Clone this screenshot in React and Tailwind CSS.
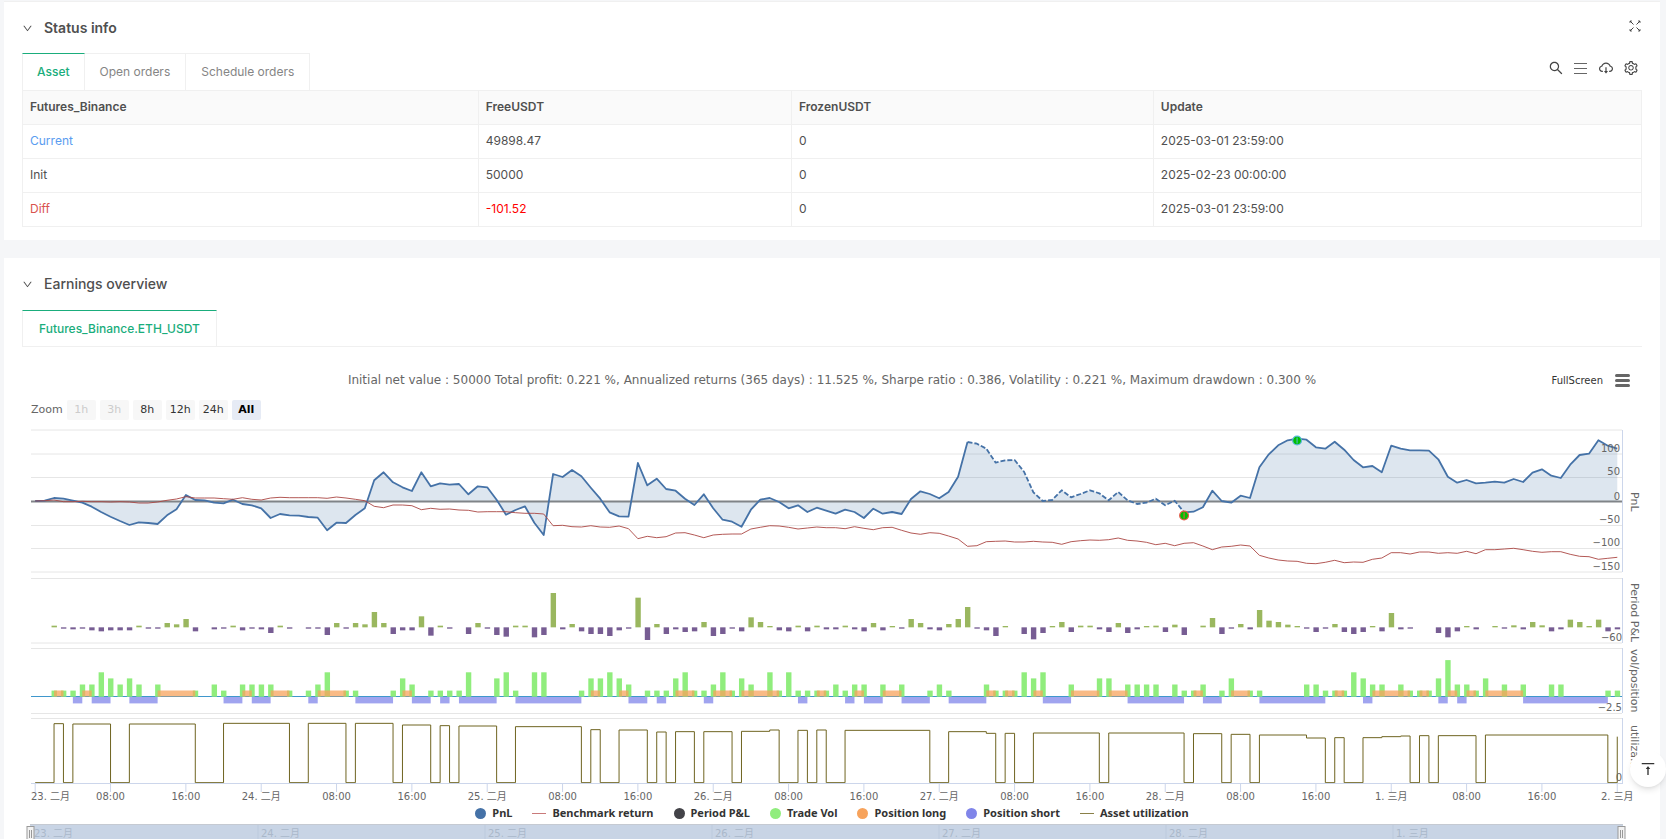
import {
  AiOutlineCloudDownload,
  AiOutlineDown,
  AiOutlineSearch,
  AiOutlineSetting,
  AiOutlineVerticalAlignTop,
} from "react-icons/ai";

const assetRows = [
  { name: "Current", free: "49898.47", frozen: "0", update: "2025-03-01 23:59:00", nameClass: "text-[#5a9cf0]", freeClass: "" },
  { name: "Init", free: "50000", frozen: "0", update: "2025-02-23 00:00:00", nameClass: "", freeClass: "" },
  { name: "Diff", free: "-101.52", frozen: "0", update: "2025-03-01 23:59:00", nameClass: "text-[#d9534f]", freeClass: "text-[#ff0000]" },
];

const zoomRanges = [
  { label: "1h", className: "bg-[#f7f7f7] text-[#cccccc]", disabled: true },
  { label: "3h", className: "bg-[#f7f7f7] text-[#cccccc]", disabled: true },
  { label: "8h", className: "bg-[#f7f7f7] text-[#333333]" },
  { label: "12h", className: "bg-[#f7f7f7] text-[#333333]" },
  { label: "24h", className: "bg-[#f7f7f7] text-[#333333]" },
  { label: "All", className: "bg-[#e6ebf5] font-bold text-black" },
];

const legend = [
  { label: "PnL", color: "#4572a7", dot: true },
  { label: "Benchmark return", color: "#c97a7a" },
  { label: "Period P&L", color: "#434348", dot: true },
  { label: "Trade Vol", color: "#90ed7d", dot: true },
  { label: "Position long", color: "#f7a35c", dot: true },
  { label: "Position short", color: "#8085e9", dot: true },
  { label: "Asset utilization", color: "#8a8048" },
];

// Hourly series. Vertical values are in ticks, three ticks to a pixel.
const TICK = 3;
const STEP = 9.417;
const LEFT = 9;
const RIGHT = 1600;

const pnl = [
  243, 242, 234, 236, 242, 248, 260, 276, 290, 303, 315, 307, 309, 312, 286, 268, 225, 240, 241, 248, 250, 239, 252, 256,
  265, 294, 282, 286, 287, 291, 293, 331, 308, 309, 285, 265, 181, 157, 187, 202, 213, 157, 199, 190, 194, 192, 223, 199,
  202, 239, 284, 270, 259, 308, 345, 162, 171, 150, 169, 203, 236, 277, 289, 290, 129, 196, 176, 207, 212, 236, 255, 223,
  265, 299, 305, 320, 269, 239, 234, 246, 265, 256, 276, 263, 272, 281, 269, 276, 294, 266, 281, 276, 282, 237, 214, 222,
  235, 216, 170, 66, 71, 86, 128, 121, 120, 155, 217, 243, 240, 211, 232, 222, 211, 220, 241, 216, 241, 252, 248, 236,
  256, 242, 277, 275, 262, 212, 243, 248, 227, 234, 142, 103, 76, 61, 56, 59, 82, 86, 65, 89, 120, 142, 138, 157,
  77, 86, 91, 91, 92, 118, 170, 188, 180, 190, 188, 185, 188, 177, 186, 158, 148, 167, 174, 134, 105, 101, 61, 77, 86,
];

const benchmark = [
  243, 242, 240, 245, 245, 244, 245, 245, 246, 245, 246, 249, 249, 246, 241, 237, 230, 234, 234, 234, 236, 238, 233, 238,
  240, 234, 232, 233, 233, 233, 233, 235, 231, 234, 238, 242, 259, 263, 255, 255, 257, 269, 265, 268, 267, 270, 271, 276,
  275, 275, 275, 278, 280, 280, 282, 317, 316, 320, 321, 317, 321, 322, 318, 326, 356, 349, 353, 350, 339, 338, 345, 353,
  345, 343, 342, 342, 327, 322, 317, 318, 322, 327, 324, 321, 323, 323, 326, 320, 325, 329, 323, 322, 331, 339, 343, 338,
  340, 348, 357, 379, 377, 365, 364, 363, 366, 366, 364, 366, 367, 373, 365, 362, 360, 361, 359, 354, 361, 363, 367, 374,
  370, 377, 370, 368, 378, 389, 381, 379, 375, 378, 406, 414, 420, 423, 424, 430, 431, 427, 421, 428, 426, 427, 418, 414,
  398, 398, 402, 396, 396, 400, 398, 400, 394, 401, 389, 389, 387, 385, 389, 394, 397, 395, 395, 403, 409, 410, 418, 415, 412,
];

const periodPnl = [
  0, 0, 5, -4, -6, -4, -9, -12, -9, -9, -9, 5, -4, -4, 13, 9, 25, -12, 0, -6, -4, 5, -9, -4,
  -6, -17, 5, -4, 0, -4, -4, -23, 13, -4, 13, 9, 46, 13, -20, -9, -9, 33, -25, 5, -4, 0, -20, 13,
  -4, -23, -28, 5, 5, -30, -23, 103, -6, 10, -12, -20, -20, -26, -9, -4, 89, -38, 10, -20, -6, -14, -12, 16,
  -26, -20, -4, -12, 30, 16, 4, -9, -12, 5, -12, 5, -6, -6, 5, -6, -12, 13, -9, 4, -4, 25, 13, -6,
  -9, 10, 25, 61, -4, -9, -26, 4, 0, -20, -36, -17, 4, 16, -14, 5, 5, -6, -14, 13, -17, -6, 4, 5,
  -14, 8, -23, 0, 5, 28, -20, -4, 10, -6, 52, 20, 16, 8, 4, -4, -14, -4, 10, -14, -20, -14, 4, -12,
  43, -6, -4, 0, 0, -17, -30, -12, 4, -6, 0, 4, -4, 6, -6, 16, 6, -12, -6, 23, 16, 4, 23, -12, -6,
];

const tradeVol = [
  0, 0, 1, 1, 1, 2, 2, 4, 3, 2, 3, 2, 0, 2, 0, 0, 0, 1, 0, 2, 1, 0, 2, 2,
  2, 2, 0, 1, 0, 1, 2, 4, 0, 1, 1, 0, 0, 0, 1, 3, 2, 0, 1, 1, 1, 1, 4, 0,
  0, 3, 4, 1, 0, 4, 4, 0, 0, 0, 1, 3, 3, 4, 3, 2, 0, 1, 1, 1, 3, 4, 1, 1,
  2, 4, 1, 3, 2, 0, 4, 1, 4, 1, 1, 1, 1, 2, 1, 2, 2, 0, 2, 0, 2, 0, 0, 1,
  2, 1, 0, 0, 0, 2, 1, 1, 1, 4, 3, 4, 0, 0, 2, 0, 0, 3, 3, 0, 2, 2, 2, 2,
  0, 2, 1, 1, 2, 0, 1, 3, 0, 1, 1, 0, 0, 0, 0, 2, 2, 1, 1, 1, 4, 3, 2, 2,
  0, 2, 1, 1, 1, 3, 6, 2, 2, 1, 3, 0, 2, 0, 2, 0, 0, 2, 2, 0, 0, 0, 0, 1, 1,
];

const longs = [
  [2, 3], [5, 6], [13, 17], [22, 23], [25, 27], [30, 33], [39, 40], [59, 60], [62, 63], [68, 70], [72, 74], [75, 79],
  [83, 84], [87, 88], [90, 92], [101, 102], [103, 104], [106, 107], [110, 113], [114, 116], [123, 124], [127, 129],
  [138, 139], [142, 146], [147, 148], [150, 151], [152, 153], [154, 158],
];

const shorts = [
  [4, 5], [6, 8], [10, 13], [20, 22], [23, 25], [29, 30], [34, 38], [40, 42], [43, 44], [45, 49], [51, 58], [63, 65],
  [66, 67], [71, 72], [81, 82], [86, 87], [88, 90], [92, 95], [97, 101], [107, 110], [116, 122], [124, 126], [130, 137],
  [141, 142], [149, 150], [151, 152], [158, 167],
];

// [from hour, to hour, level]
const utilization = [
  [2, 3, 911], [4, 8, 912], [10, 17, 912], [20, 27, 910], [29, 33, 910], [34, 38, 910], [39, 42, 915], [43, 44, 917],
  [45, 49, 918], [51, 58, 920], [59, 60, 929], [62, 65, 930], [66, 67, 936], [68, 70, 935], [71, 74, 935], [75, 78, 934],
  [78, 79, 930], [81, 82, 931], [83, 84, 930], [86, 95, 931], [97, 101, 935], [101, 102, 940], [103, 104, 940],
  [106, 113, 939], [114, 122, 939], [123, 126, 941], [127, 129, 943], [130, 135, 945], [135, 137, 954], [138, 139, 953],
  [141, 143, 953], [143, 145, 950], [145, 146, 948], [147, 148, 947], [149, 153, 947], [154, 167, 945], [168, 168, 950],
];

const days = ["23. 二月", "24. 二月", "25. 二月", "26. 二月", "27. 二月", "28. 二月", "1. 三月", "2. 三月"];

const yLabels = [
  { text: "100", y: 32 },
  { text: "50", y: 55 },
  { text: "0", y: 80 },
  { text: "−50", y: 103 },
  { text: "−100", y: 126 },
  { text: "−150", y: 150 },
];

const axisTitles = [
  { text: "PnL", y: 72 },
  { text: "Period P&L", y: 163 },
  { text: "vol/position", y: 229 },
  { text: "utiliza...", y: 305 },
];

const hourX = (hour) => 13.2 + hour * STEP;

const points = (series, from = 0, to = series.length - 1) =>
  series
    .slice(from, to + 1)
    .map((value, index) => `${hourX(from + index).toFixed(1)},${(value / TICK).toFixed(1)}`)
    .join(" ");

function utilizationPath() {
  const base = 1088 / TICK;
  let path = `M${hourX(0)} ${base}`;
  let last = 0;
  utilization.forEach(([from, to, level]) => {
    if (from !== last) path += `V${base}H${hourX(from)}`;
    path += `V${level / TICK}H${hourX(to)}`;
    last = to;
  });
  return path;
}

function GridLine({ y, className = "stroke-[#e6e6e6]" }) {
  return <line x1={LEFT} x2={RIGHT} y1={y} y2={y} className={className} />;
}

function PnlPane() {
  const zero = 81;
  return (
    <g>
      {[10, 34, 57.5, 105.5, 128.5, 152].map((y) => (
        <GridLine key={y} y={y} />
      ))}
      <polygon points={`${hourX(0)},${zero} ${points(pnl)} ${hourX(168)},${zero}`} className="fill-[#4572a7]/18" />
      <line x1={LEFT} x2={RIGHT} y1={81.5} y2={81.5} strokeWidth="2.2" className="stroke-[#808488]" />
      <g fill="none" strokeLinejoin="round" strokeWidth="1.8" className="stroke-[#4572a7]">
        <polyline points={points(pnl, 0, 99)} />
        <polyline points={points(pnl, 99, 122)} strokeDasharray="5 2" />
        <polyline points={points(pnl, 122)} />
      </g>
      <polyline points={points(benchmark)} fill="none" className="stroke-[#aa4643]" strokeWidth="0.9" />
      <circle cx={hourX(122)} cy="95.5" r="4.4" strokeWidth="1.2" className="fill-[#00c000] stroke-[#e8594a]" />
      <line x1={hourX(122)} x2={hourX(122)} y1="92.5" y2="98.5" className="stroke-[#e8594a]" />
      <circle cx={hourX(134)} cy="20.5" r="4.4" strokeWidth="1.2" className="fill-[#00c000] stroke-[#5ab8d8]" />
      <line x1={hourX(134)} x2={hourX(134)} y1="17.5" y2="23.5" className="stroke-[#5ab8d8]" />
      {yLabels.map((label) => (
        <text key={label.text} x="1598" y={label.y} textAnchor="end">
          {label.text}
        </text>
      ))}
    </g>
  );
}

function PeriodPane() {
  return (
    <g>
      <GridLine y={158.5} />
      <GridLine y={223} />
      {periodPnl.map((value, index) =>
        value === 0 ? null : (
          <rect
            key={index}
            x={hourX(index) - 2.5}
            y={value > 0 ? (622 - value) / TICK : 622 / TICK}
            width="5.4"
            height={Math.abs(value) / TICK}
            className={value > 0 ? "fill-[#9ab75f]" : "fill-[#775d93]"}
          />
        )
      )}
      <text x="1600" y="221" textAnchor="end">
        −60
      </text>
    </g>
  );
}

function PositionPane() {
  return (
    <g>
      <GridLine y={228.5} />
      <GridLine y={293.5} />
      <GridLine y={276.5} className="stroke-[#3f97cc]" />
      {tradeVol.map((value, index) => (
        <rect
          key={index}
          x={hourX(index) - 2.5}
          y={276.7 - value * 6.1}
          width="5.4"
          height={value * 6.1}
          className="fill-[#90ed7d]"
        />
      ))}
      {longs.map(([from, to]) => (
        <rect key={from} x={hourX(from)} y="270.5" width={(to - from) * STEP} height="6" className="fill-[#f7a35c]/75" />
      ))}
      {shorts.map(([from, to]) => (
        <rect key={from} x={hourX(from)} y="277" width={(to - from) * STEP} height="6.4" className="fill-[#8085e9]/75" />
      ))}
      <text x="1600" y="291" textAnchor="end">
        −2.5
      </text>
    </g>
  );
}

function UtilizationPane() {
  return (
    <g>
      <GridLine y={298.5} />
      <path d={utilizationPath()} fill="none" className="stroke-[#6f6420]" />
      <text x="1600" y="361" textAnchor="end">
        0
      </text>
      <GridLine y={363.5} className="stroke-[#ccd6eb]" />
    </g>
  );
}

function TimeAxis() {
  const ticks = Array.from({ length: 22 }, (_, index) => index * 8);
  const label = (hour) => (hour % 24 === 0 ? days[hour / 24] : hour % 24 === 8 ? "08:00" : "16:00");
  return (
    <g>
      {ticks.map((hour) => (
        <g key={hour}>
          <line x1={hourX(hour)} x2={hourX(hour)} y1="364" y2="372" className="stroke-[#ccd6eb]" />
          <text x={hour === 0 ? LEFT : hourX(hour)} y="380" textAnchor={hour === 0 ? "start" : "middle"}>
            {label(hour)}
          </text>
        </g>
      ))}
    </g>
  );
}

function EarningsChart() {
  return (
    <svg viewBox="0 0 1620 384" className="block w-full fill-[#666666] text-[10px]" role="img" aria-label="Earnings chart">
      <PnlPane />
      <PeriodPane />
      <PositionPane />
      <UtilizationPane />
      <TimeAxis />
      <path d="M1600.5 10V152M1600.5 158V223M1600.5 228V293M1600.5 298V364" className="stroke-[#ccd6eb]" />
      {axisTitles.map((title) => (
        <text key={title.text} transform={`translate(1609 ${title.y}) rotate(90)`} className="text-[11px]">
          {title.text}
        </text>
      ))}
    </svg>
  );
}

function Navigator() {
  return (
    <svg viewBox="0 0 1620 40" className="block w-full text-[10px]" role="img" aria-label="Time range">
      <rect x="8" y="0" width="1593" height="40" className="fill-[#c8d4e5]" />
      <line x1="8" x2="1601" y1="0.5" y2="0.5" className="stroke-[#c5cad2]" />
      {days.slice(0, 7).map((day, index) => (
        <g key={day}>
          {index > 0 && <line x1={9 + index * 227} x2={9 + index * 227} y1="1" y2="40" className="stroke-[#bccadd]" />}
          <text x={12 + index * 227} y="13" className="fill-[#aab8ca]">
            {day}
          </text>
        </g>
      ))}
      {[8.5, 1599.5].map((x) => (
        <g key={x} className="fill-[#f2f2f2] stroke-[#999999]">
          <rect x={x - 3.5} y="2.5" width="7" height="15" />
          <path d={`M${x - 1} 6V14M${x + 1} 6V14`} />
        </g>
      ))}
    </svg>
  );
}

function SectionTitle({ children, className }) {
  return (
    <button type="button" className={`flex items-center gap-[11px] text-sm text-[#4f4f4f] ${className}`}>
      <AiOutlineDown className="size-[11px]" />
      {children}
    </button>
  );
}

export default function App() {
  return (
    <div className="h-screen overflow-hidden bg-[#f5f6f8] pt-px pr-1.5 pl-1 font-['Inter','Noto_Sans_CJK_SC',sans-serif] text-[#505050]">
      <section className="h-[239px] border-t border-[#f0f0f0] bg-white px-[18px] pt-4">
        <div className="flex h-5 items-center justify-between pr-px">
          <SectionTitle className="font-semibold">Status info</SectionTitle>
          <button type="button" aria-label="Expand" className="pb-1">
            <svg viewBox="0 0 12 12" className="size-3 fill-none stroke-[#444444]">
              <path d="M1 1L4.5 4.5M11 1L7.5 4.5M1 11L4.5 7.5M11 11L7.5 7.5" />
              <path d="M1 3V1H3M9 1H11V3M1 9V11H3M9 11H11V9" strokeWidth="0.8" />
            </svg>
          </button>
        </div>
        <div className="mt-[15px] flex h-[37px] justify-between">
          <div role="tablist" className="flex text-xs text-[#858585]">
            <button type="button" role="tab" aria-selected="true" className="border-x border-t border-x-[#f0f0f0] border-t-[#1aad7c] px-3.5 font-medium text-[#1aad7c]">
              Asset
            </button>
            <button type="button" role="tab" className="border-t border-r border-[#f0f0f0] px-[15px]">
              Open orders
            </button>
            <button type="button" role="tab" className="border-t border-r border-[#f0f0f0] px-[15px]">
              Schedule orders
            </button>
          </div>
          <div className="flex h-[30px] items-center gap-[9px] pr-[3px] text-[#444444]">
            <button type="button" aria-label="Search"><AiOutlineSearch className="size-4" /></button>
            <button type="button" aria-label="List">
              <svg viewBox="0 0 16 16" className="size-4 stroke-[#666666]">
                <path d="M1 3.5H14M1 8.5H14M1 13.5H14" />
              </svg>
            </button>
            <button type="button" aria-label="Download"><AiOutlineCloudDownload className="size-4" /></button>
            <button type="button" aria-label="Settings"><AiOutlineSetting className="size-4" /></button>
          </div>
        </div>
        <table className="w-full table-fixed border-collapse text-left text-xs">
          <colgroup>
            <col className="w-[28.15%]" />
            <col className="w-[19.35%]" />
            <col className="w-[22.35%]" />
            <col />
          </colgroup>
          <thead>
            <tr className="h-[34px] bg-[#fafafa]">
              {["Futures_Binance", "FreeUSDT", "FrozenUSDT", "Update"].map((head) => (
                <th key={head} className="border border-[#f0f0f0] px-[7px] pb-0.5 font-semibold">
                  {head}
                </th>
              ))}
            </tr>
          </thead>
          <tbody>
            {assetRows.map((row) => (
              <tr key={row.name} className="h-[34px]">
                <td className={`border border-[#f0f0f0] px-[7px] pb-0.5 ${row.nameClass}`}>{row.name}</td>
                <td className={`border border-[#f0f0f0] px-[7px] pb-0.5 ${row.freeClass}`}>{row.free}</td>
                <td className="border border-[#f0f0f0] px-[7px] pb-0.5">{row.frozen}</td>
                <td className="border border-[#f0f0f0] px-[7px] pb-0.5">{row.update}</td>
              </tr>
            ))}
          </tbody>
        </table>
      </section>

      <section className="mt-[18px] bg-white px-[18px] pt-4">
        <SectionTitle className="font-medium">Earnings overview</SectionTitle>
        <div role="tablist" className="mt-4 flex h-[37px] border-b border-[#f0f0f0]">
          <button type="button" role="tab" aria-selected="true" className="border-x border-t border-x-[#f0f0f0] border-t-[#1aad7c] px-4 text-xs font-medium text-[#1aad7c]">
            Futures_Binance.ETH_USDT
          </button>
        </div>
        <div className="font-['DejaVu_Sans','Noto_Sans_CJK_SC',sans-serif]">
          <div className="mt-[25px] grid grid-cols-[1fr_auto_1fr] items-center">
            <h2 className="col-start-2 text-xs text-[#666666]">
              Initial net value : 50000 Total profit: 0.221 %, Annualized returns (365 days) : 11.525 %, Sharpe ratio : 0.386, Volatility : 0.221 %, Maximum drawdown : 0.300 %
            </h2>
            <div className="flex items-center gap-3 justify-self-end pr-3">
              <button type="button" className="text-[10px] text-[#333333]">FullScreen</button>
              <button type="button" aria-label="Chart menu" className="flex w-[15px] flex-col gap-[2px]">
                <span className="h-[3px] rounded-full bg-[#666666]" />
                <span className="h-[3px] rounded-full bg-[#666666]" />
                <span className="h-[3px] rounded-full bg-[#666666]" />
              </button>
            </div>
          </div>
          <div className="mt-3 flex h-5 items-center gap-1 pl-[9px] text-[11px] text-[#666666]">
            <span>Zoom</span>
            {zoomRanges.map((range) => (
              <button key={range.label} type="button" disabled={range.disabled} className={`h-5 w-[29px] rounded-xs ${range.className}`}>
                {range.label}
              </button>
            ))}
          </div>
          <EarningsChart />
          <div className="flex h-5 items-center justify-center gap-5 pb-0.5 font-['Noto_Sans',sans-serif] text-[11px] font-bold text-[#333333]">
            {legend.map((item) => (
              <button key={item.label} type="button" className="flex items-center gap-1.5">
                <span className={item.dot ? "size-[11px] rounded-full" : "h-px w-3.5"} style={{ backgroundColor: item.color }} />
                {item.label}
              </button>
            ))}
          </div>
          <Navigator />
        </div>
      </section>

      <button type="button" aria-label="Back to top" className="fixed right-0 bottom-[52px] flex size-9 items-center justify-center rounded-full bg-white text-[#333333] shadow-md">
        <AiOutlineVerticalAlignTop className="size-[18px]" />
      </button>
    </div>
  );
}
